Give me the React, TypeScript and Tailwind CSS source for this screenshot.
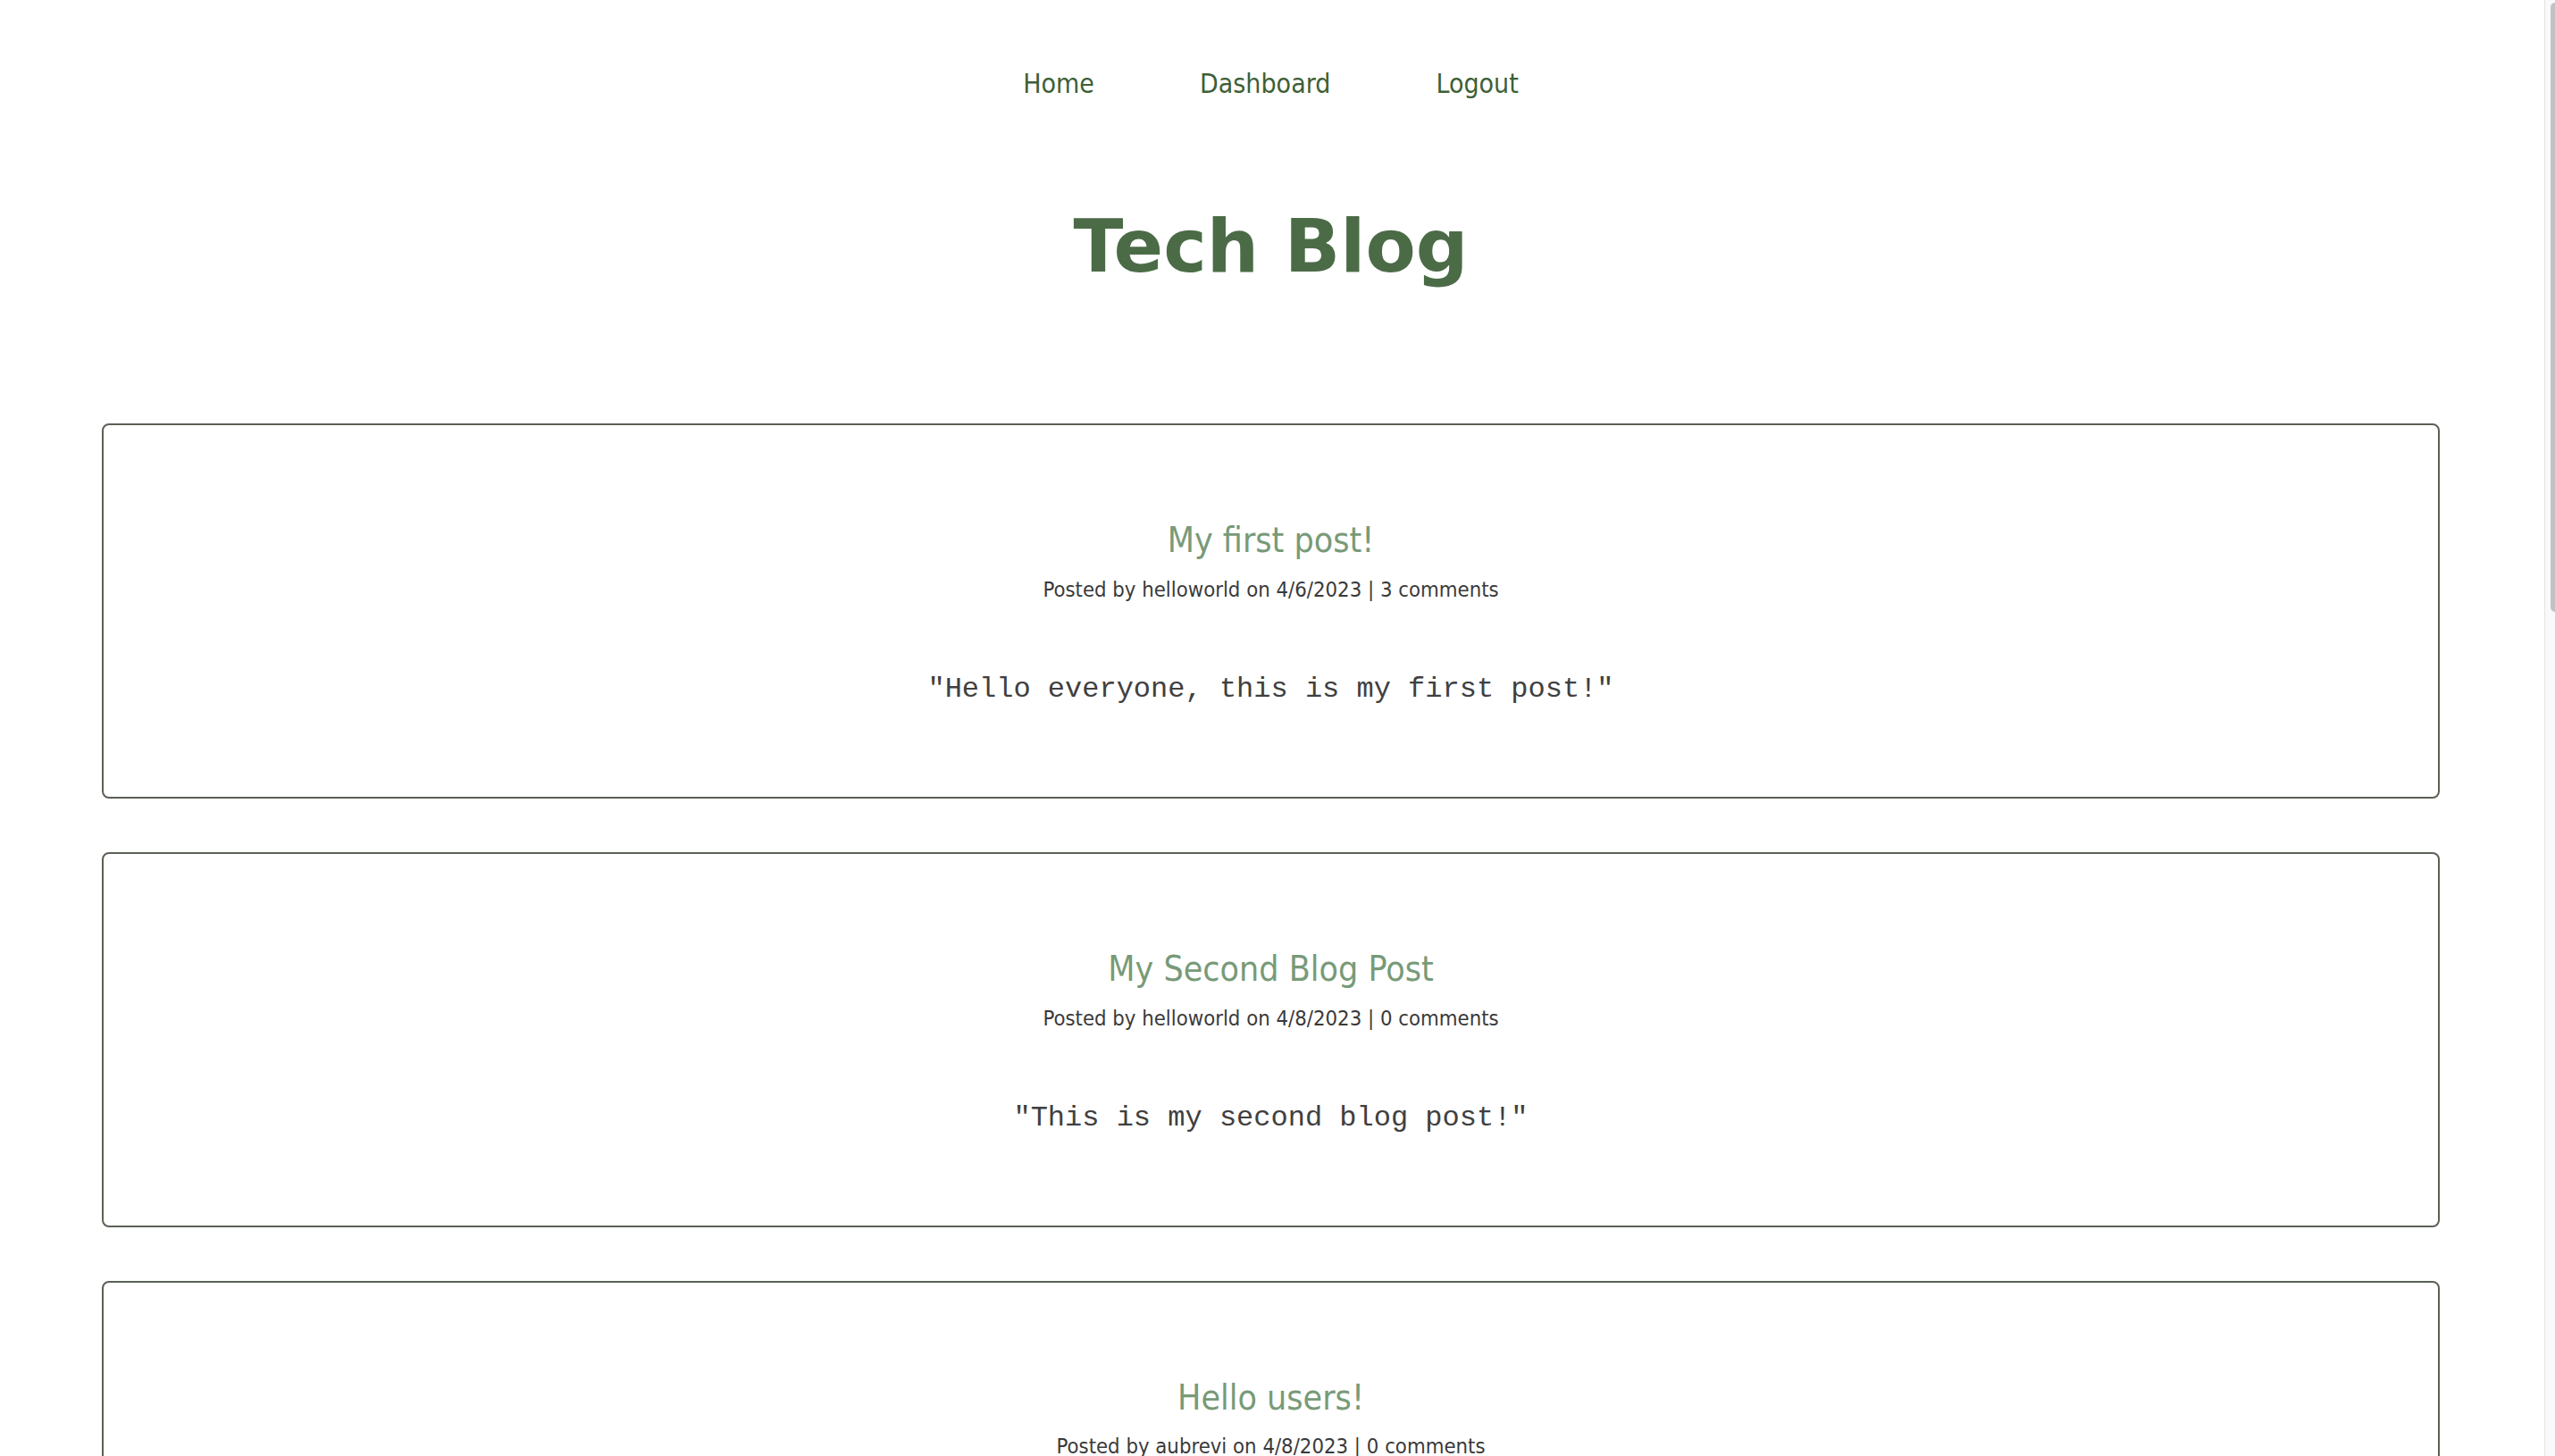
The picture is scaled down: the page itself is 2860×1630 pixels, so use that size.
import React from "react";

type Post = { title: string; author: string; date: string; comments: number; body: string };

const posts: Post[] = [
  { title: "My first post!", author: "helloworld", date: "4/6/2023", comments: 3, body: "Hello everyone, this is my first post!" },
  { title: "My Second Blog Post", author: "helloworld", date: "4/8/2023", comments: 0, body: "This is my second blog post!" },
  { title: "Hello users!", author: "aubrevi", date: "4/8/2023", comments: 0, body: "Hi there, welcome to the tech blog!" },
  { title: "Learning React", author: "aubrevi", date: "4/9/2023", comments: 1, body: "Components make everything easier." },
  { title: "MVC patterns", author: "helloworld", date: "4/10/2023", comments: 2, body: "Models, views and controllers." },
  { title: "Handlebars tips", author: "aubrevi", date: "4/11/2023", comments: 0, body: "Partials keep templates tidy." },
  { title: "Sequelize notes", author: "helloworld", date: "4/12/2023", comments: 1, body: "Associations are powerful." },
];

function PostCard({ post }: { post: Post }) {
  return (
    <div className="mx-auto w-[92%] rounded-[8px] border-2 border-[#5a6155] bg-white pt-[109px] pb-[103.5px] text-center">
      <h2 className="font-['DejaVu_Sans_Condensed','DejaVu_Sans',sans-serif] font-stretch-condensed text-[39px] leading-none font-normal text-[#789a78]">
        {post.title}
      </h2>
      <p className="mt-[24.7px] font-['DejaVu_Sans_Condensed','DejaVu_Sans',sans-serif] font-stretch-condensed text-[23.7px] leading-none text-[#3a3a3a]">
        Posted by {post.author} on {post.date} | {post.comments} comments
      </p>
      <p className="mt-[84px] font-['Liberation_Mono',monospace] text-[32px] leading-none text-[#404040]">
        "{post.body}"
      </p>
    </div>
  );
}

export default function App() {
  return (
    <div className="flex h-screen bg-white">
      <div className="min-w-0 flex-1 overflow-y-auto">
        <nav className="flex justify-center gap-[118px] pt-[79px] font-['DejaVu_Sans_Condensed','DejaVu_Sans',sans-serif] font-stretch-condensed text-[30px] leading-none text-[#3d5f36]">
          <a href="#" className="leading-none">Home</a>
          <a href="#" className="leading-none">Dashboard</a>
          <a href="#" className="leading-none">Logout</a>
        </nav>
        <h1 className="mt-[126px] text-center font-['DejaVu_Sans',sans-serif] text-[82px] leading-none font-bold text-[#4b6b47]">
          Tech Blog
        </h1>
        <main className="mt-[157px] flex flex-col gap-[60px] pb-[120px]">
          {posts.map((p, i) => (
            <PostCard key={i} post={p} />
          ))}
        </main>
      </div>
      <div className="flex w-[15px] shrink-0 bg-white">
        <div className="w-[3px] bg-white" />
        <div className="w-px bg-[#e4e4e4]" />
        <div className="flex flex-1 justify-end bg-[#f9f9f9] pt-[3px]">
          <div className="h-[682px] w-[5px] rounded-l-full rounded-r-[2px] bg-[#c2c2c2]" />
        </div>
      </div>
    </div>
  );
}
